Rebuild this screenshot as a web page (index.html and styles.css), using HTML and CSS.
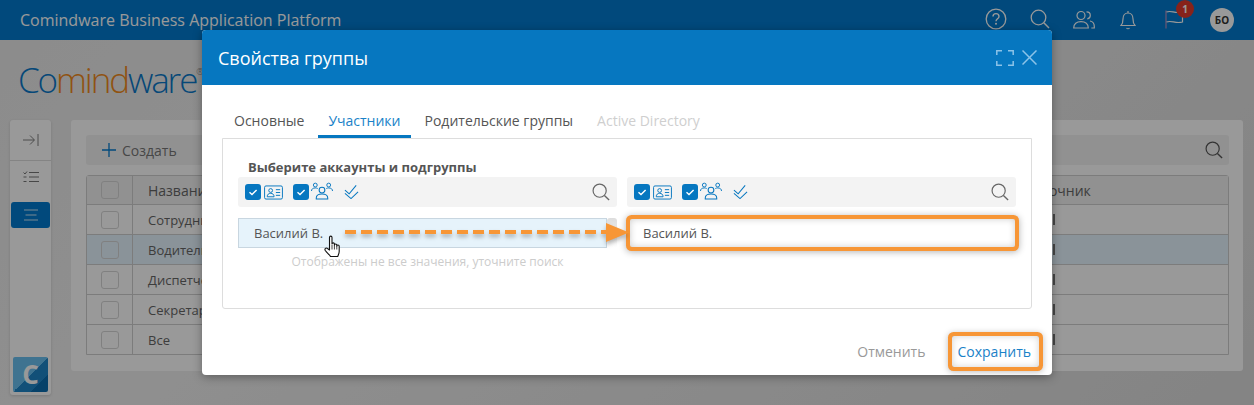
FILE: index.html
```html
<!DOCTYPE html>
<html lang="ru">
<head>
<meta charset="utf-8">
<title>Свойства группы</title>
<link rel="stylesheet" href="styles.css">
</head>
<body>
<svg class="defs" width="0" height="0">
  <symbol id="i-search" viewBox="0 0 20 20"><circle cx="8.5" cy="8.5" r="7.3" fill="none" stroke="currentColor" stroke-width="1.3"/><path d="M13.8 13.8 19 19" fill="none" stroke="currentColor" stroke-width="1.5"/></symbol>
  <symbol id="i-check" viewBox="0 0 16 16"><path d="M4.5 8.3 7 10.6 11.6 6" fill="none" stroke="#fff" stroke-width="1.4"/></symbol>
  <symbol id="i-card" viewBox="0 0 20 15"><rect x=".6" y=".6" width="18.8" height="13.8" rx="1.5" fill="none" stroke="currentColor" stroke-width="1"/><circle cx="7" cy="5.4" r="2" fill="none" stroke="currentColor"/><path d="M3.4 12c0-2.6 1.6-3.6 3.6-3.6s3.600 1 3.600 3.600zM12.500 4.500h4.500M12.500 7.500h4.500M12.500 10.500h4.500" fill="none" stroke="currentColor"/></symbol>
  <symbol id="i-group" viewBox="0 0 23 18"><circle cx="11.500" cy="8" r="3" fill="none" stroke="currentColor" stroke-width="1.100"/><path d="M5.500 17.400v-1c0-3 2.500-4.200 6-4.200s6 1.200 6 4.200v1z" fill="none" stroke="currentColor" stroke-width="1.100"/><circle cx="4.500" cy="2.800" r="2" fill="none" stroke="currentColor"/><circle cx="18.500" cy="2.800" r="2" fill="none" stroke="currentColor"/><path d="M.5 9c0-2 1.500-3.200 4-3.200 1 0 1.800.2 2.500.6M22.500 9c0-2-1.500-3.200-4-3.200-1 0-1.800.2-2.500.6" fill="none" stroke="currentColor"/></symbol>
  <symbol id="i-dcheck" viewBox="0 0 16 16"><path d="M1 6.500 5.500 10.500 13 1.500M1 10 7.500 15.500 15 8.500" fill="none" stroke="currentColor" stroke-width="1.100"/></symbol>
</svg>

<header class="topbar">
  <div class="product">Comindware Business Application Platform</div>
  <nav class="top-icons">
    <svg class="ti ti-help" viewBox="0 0 22 22"><circle cx="11" cy="11" r="9.800" fill="none" stroke="currentColor" stroke-width="1.300"/><path d="M8 8.600c0-1.900 1.300-3 3-3s3 1.100 3 2.800c0 2.400-3 2.400-3 4.800" fill="none" stroke="currentColor" stroke-width="1.400"/><circle cx="11" cy="15.800" r="1" fill="currentColor"/></svg>
    <svg class="ti ti-search"><use href="#i-search"/></svg>
    <svg class="ti ti-users" viewBox="0 0 22 19"><circle cx="8" cy="5.500" r="4" fill="none" stroke="currentColor" stroke-width="1.200"/><path d="M.7 18c0-4.500 3-6.300 7.300-6.300s7.300 1.800 7.300 6.300z" fill="none" stroke="currentColor" stroke-width="1.200"/><path d="M13.500 1.800c2.300 0 3.800 1.500 3.800 3.500s-1.300 3.400-3 3.600M17 11c2.600.5 4.300 2.300 4.300 5.500v1.500h-3" fill="none" stroke="currentColor" stroke-width="1.200"/></svg>
    <svg class="ti ti-bell" viewBox="0 0 16 20"><path d="M1 15.500c1.500-1.500 2-2.500 2-6.500 0-3.500 2-6 5-6s5 2.500 5 6c0 4 .5 5 2 6.500zM8 1v2M6.500 18c.8 1 2.200 1 3 0" fill="none" stroke="currentColor" stroke-width="1.200"/></svg>
    <span class="flag">
      <svg class="ti ti-flag" viewBox="0 0 19 19"><path d="M1 .5v18" stroke="#a78cc0" stroke-width="1.300" fill="none"/><path d="M1.500 2c5-2 8 2 16 0v10c-7 2-11-2-16 0" fill="none" stroke="currentColor" stroke-width="1.200"/></svg>
      <span class="badge">1</span>
    </span>
    <span class="avatar">БО</span>
  </nav>
</header>

<div class="brand"><span class="blue">Co</span><span class="orange">mind</span><span class="blue">ware</span><sup class="reg">®</sup></div>

<div class="workspace">
  <aside class="sidebar">
    <div class="side-top">
      <svg class="side-ic" viewBox="0 0 16 12"><path d="M0 6h11M7 1.500 11.500 6 7 10.500M15 0v12" fill="none" stroke="#fff" stroke-opacity=".75" stroke-width="1"/></svg>
    </div>
    <div class="side-item">
      <svg class="side-ic" viewBox="0 0 16 12"><path d="M6 1.500h10M6 6h10M6 10.500h10" stroke="#fff" stroke-opacity=".8" stroke-width="1.200" fill="none"/><path d="M.5 1.500 2 3 4 .5M.5 6h3M.5 10.500h3" stroke="#fff" stroke-opacity=".8" fill="none"/></svg>
    </div>
    <div class="side-active">
      <svg class="side-ic" viewBox="0 0 16 12"><path d="M1 1h14M2.500 6h11M1 11h14" stroke="#fff" stroke-opacity=".8" stroke-width="1.200" fill="none"/></svg>
    </div>
    <div class="side-logo">C</div>
  </aside>

  <main class="card">
    <div class="toolbar">
      <span class="create"><svg class="plus" viewBox="0 0 14 14"><path d="M7 0v14M0 7h14" stroke="#037bcf" stroke-width="1.300" fill="none"/></svg>Создать</span>
      <svg class="tool-search"><use href="#i-search"/></svg>
    </div>
    <div class="table">
      <div class="tr th"><span class="c-check"><i class="box"></i></span><span class="c-name">Название</span><span class="c-src">Источник</span></div>
      <div class="tr"><span class="c-check"><i class="box"></i></span><span class="c-name">Сотрудники</span><span class="c-src"><i class="stem"></i></span></div>
      <div class="tr sel"><span class="c-check"><i class="box"></i></span><span class="c-name">Водители</span><span class="c-src"><i class="stem"></i></span></div>
      <div class="tr"><span class="c-check"><i class="box"></i></span><span class="c-name">Диспетчеры</span><span class="c-src"><i class="stem"></i></span></div>
      <div class="tr"><span class="c-check"><i class="box"></i></span><span class="c-name">Секретари</span><span class="c-src"><i class="stem"></i></span></div>
      <div class="tr"><span class="c-check"><i class="box"></i></span><span class="c-name">Все</span><span class="c-src"><i class="stem"></i></span></div>
    </div>
  </main>
</div>

<div class="overlay">
  <section class="modal">
    <div class="modal-head">
      <h1 class="modal-title">Свойства группы</h1>
      <svg class="head-ic" viewBox="0 0 18 16"><path d="M.8 5V.8H6M12 .8h5.200V5M17.200 11v4.200H12M6 15.200H.8V11" fill="none" stroke="#8cc3e8" stroke-width="1.500"/></svg>
      <svg class="head-x" viewBox="0 0 15 15"><path d="M.5.5l14 14M14.500.5l-14 14" fill="none" stroke="#8cc3e8" stroke-width="1.500"/></svg>
    </div>
    <div class="modal-body">
      <div class="tabs">
        <span class="tab">Основные</span>
        <span class="tab active">Участники</span>
        <span class="tab">Родительские группы</span>
        <span class="tab disabled">Active Directory</span>
      </div>
      <div class="panel">
        <div class="panel-label">Выберите аккаунты и подгруппы</div>
        <div class="cols">
          <div class="col">
            <div class="filter">
              <i class="cb"><svg><use href="#i-check"/></svg></i><svg class="f-card"><use href="#i-card"/></svg>
              <i class="cb cb2"><svg><use href="#i-check"/></svg></i><svg class="f-group"><use href="#i-group"/></svg>
              <svg class="f-dcheck"><use href="#i-dcheck"/></svg>
              <svg class="f-search"><use href="#i-search"/></svg>
            </div>
            <div class="list-wrap">
              <div class="row row-selected">Василий В.</div>
              <div class="scroll"></div>
            </div>
            <div class="note">Отображены не все значения, уточните поиск</div>
          </div>
          <div class="col">
            <div class="filter">
              <i class="cb"><svg><use href="#i-check"/></svg></i><svg class="f-card"><use href="#i-card"/></svg>
              <i class="cb cb2"><svg><use href="#i-check"/></svg></i><svg class="f-group"><use href="#i-group"/></svg>
              <svg class="f-dcheck"><use href="#i-dcheck"/></svg>
              <svg class="f-search"><use href="#i-search"/></svg>
            </div>
            <div class="list-wrap">
              <div class="row row-target">Василий В.</div>
            </div>
          </div>
        </div>
      </div>
    </div>
    <div class="modal-foot">
      <button class="btn">Отменить</button>
      <button class="btn primary">Сохранить</button>
    </div>

    <svg class="drag-arrow" viewBox="0 0 290 24">
      <path d="M1 10H264" fill="none" stroke="#f79636" stroke-width="4" stroke-dasharray="11 5"/>
      <path d="M262 1 285 10.500 262 20z" fill="#f79636"/>
    </svg>
    <svg class="hand" viewBox="0 0 18 23"><path d="M5.500 15V2.500C5.500 .6 8 .6 8 2.500V9c0-1.500 2.400-1.500 2.400 0v1c0-1.400 2.400-1.400 2.400 0v1c0-1.300 2.400-1.300 2.400.2v5.300c0 2-1 3.500-1.500 5H6.500C5.500 19.500 3 18 1.300 15.500.2 13.800 2 12.300 3.500 13.500z" fill="#fff" stroke="#111" stroke-width="1.100" stroke-linejoin="round"/><path d="M8 10v4.500M10.400 10v4.500M12.800 11v3.500" fill="none" stroke="#111" stroke-width=".8"/></svg>
  </section>
</div>
</body>
</html>
```
FILE: styles.css
```css
* { box-sizing: border-box; }
html, body { margin: 0; height: 405px; overflow: hidden; }
body {
  position: relative;
  width: 1254px;
  font-family: "Open Sans", "Noto Sans", sans-serif;
  font-size: 14px;
  color: #666;
  background: linear-gradient(135deg, #e9e9e9 0%, #efefef 30%, #e4e4e4 70%, #dcdcdc 100%);
}
.defs { position: absolute; }

.topbar { height: 40px; background: #037bcf; display: flex; align-items: center; padding-left: 20px; color: #fff; }
.product { font-size: 16px; line-height: 40px; color: #fff; white-space: nowrap; }
.top-icons { margin-left: auto; display: flex; align-items: center; color: #fff; }
.ti { display: block; }
.ti-help { width: 22px; height: 22px; margin-right: 23px; margin-top: -2px; }
.ti-search { width: 20px; height: 20px; margin-right: 23px; margin-top: -2px; }
.ti-users { width: 22px; height: 19px; margin-right: 25px; margin-top: -2px; }
.ti-bell { width: 16px; height: 20px; margin-right: 29px; }
.flag { position: relative; display: block; margin-right: 26px; }
.ti-flag { width: 19px; height: 19px; margin-top: -1px; }
.badge { position: absolute; left: 11px; top: -11px; width: 18px; height: 18px; border-radius: 50%; background: #e2392c; color: #fff; font-size: 10px; font-weight: 700; line-height: 18px; text-align: center; }
.avatar { width: 24px; height: 24px; margin-right: 20px; border-radius: 50%; background: #fff; color: #333; font-size: 10px; font-weight: 700; line-height: 24px; text-align: center; }

.brand { height: 80px; padding: 18px 0 0 18px; font-size: 35px; font-weight: 300; letter-spacing: -2.1px; line-height: 44px; white-space: nowrap; }
.blue { color: #0a78c8; }
.orange { color: #f08a1d; }
.reg { font-size: 9px; color: #888; letter-spacing: 0; vertical-align: 18px; line-height: 0; }

.workspace { display: flex; gap: 20px; padding-left: 10px; padding-right: 11px; align-items: flex-start; }
.sidebar { width: 41px; height: 275px; background: #fff; border-radius: 3px; display: flex; flex-direction: column; align-items: center; box-shadow: 0 1px 3px rgba(0,0,0,.15); }
.side-ic { width: 16px; height: 12px; display: block; }
.side-top { width: 100%; height: 41px; display: flex; align-items: center; justify-content: center; border-bottom: 1px solid #ddd; }
.side-top .side-ic path { stroke: #555; }
.side-item { height: 41px; padding-top: 10px; }
.side-item .side-ic path { stroke: #555; }
.side-active { width: 39px; height: 26px; border-radius: 3px; background: #037bcf; display: flex; align-items: center; justify-content: center; }
.side-logo { margin-top: auto; margin-bottom: 3px; width: 35px; height: 35px; border-radius: 2px; color: #fff; font-size: 26px; font-weight: 700; line-height: 35px; text-align: center; background: linear-gradient(135deg, #6ac0f0 0 50%, #1f86c8 50% 75%, #0b6db0 75%); }

.card { flex: 1; height: 251px; background: #fff; border-radius: 3px; padding: 15px 14px 0 15px; }
.toolbar { height: 30px; background: #f2f2f2; border-radius: 3px; display: flex; align-items: center; padding: 0 6px 0 16px; }
.create { display: flex; align-items: center; gap: 6px; color: #777; font-size: 14px; }
.plus { width: 14px; height: 14px; display: block; }
.tool-search { width: 18px; height: 18px; margin-left: auto; color: #555; }
.table { margin-top: 10px; border: 1px solid #cfcfcf; border-radius: 3px 3px 0 0; width: 1143px; }
.tr { height: 30px; display: flex; align-items: center; border-top: 1px solid #cfcfcf; font-size: 13px; }
.tr.th { height: 28px; background: #f2f2f2; border-top: 0; font-size: 14px; }
.tr.sel { background: #e6f5ff; }
.c-check { width: 46px; height: 100%; border-right: 1px solid #cfcfcf; display: flex; align-items: center; justify-content: center; }
.box { width: 18px; height: 18px; border: 1px solid #d6d6d6; border-radius: 3px; background: transparent; display: block; }
.c-name { padding-left: 15px; width: 880px; color: #666; }
.c-src { color: #666; padding-left: 12px; }
.stem { display: block; width: 2px; height: 11px; margin-left: 28px; background: #777; }

.overlay { position: absolute; inset: 0; background: rgba(0,0,0,.4); }
.modal { position: absolute; left: 202px; top: 30px; width: 850px; height: 345px; background: #fff; border-radius: 4px; box-shadow: 0 2px 10px rgba(0,0,0,.35); display: flex; flex-direction: column; }
.modal-head { height: 55px; background: #0677c0; border-radius: 4px 4px 0 0; display: flex; align-items: center; padding: 0 15px 0 16px; }
.modal-title { margin: 0; font-size: 18px; font-weight: 400; color: #fff; flex: 1; }
.head-ic { width: 18px; height: 16px; margin-right: 8px; display: block; }
.head-x { width: 15px; height: 15px; display: block; }

.modal-body { padding: 26px 20px 0; }
.tabs { display: flex; gap: 4px; height: 27px; margin-left: 2px; }
.tab { padding: 0 10px; line-height: 20px; font-size: 14px; color: #555; white-space: nowrap; }
.tab.active { color: #1a82c8; border-bottom: 3px solid #0677c0; }
.tab.disabled { color: #cfcfcf; }
.panel { height: 171px; border: 1px solid #ddd; border-radius: 0 0 3px 3px; padding: 19px 15px 0; }
.panel-label { height: 19px; line-height: 19px; padding-left: 10px; font-size: 13px; font-weight: 700; color: #555; }
.cols { display: grid; grid-template-columns: 379px 1fr; gap: 10px; }
.filter { height: 30px; background: #f3f3f3; border-radius: 3px; display: flex; align-items: center; padding: 0 7px; color: #0677c0; }
.cb { width: 16px; height: 16px; background: #0677c0; border-radius: 3px; display: block; margin-right: 3px; }
.cb svg { width: 16px; height: 16px; display: block; }
.cb2 { margin-left: 10px; margin-right: 2px; }
.f-card { width: 19px; height: 15px; }
.f-group { width: 22px; height: 18px; margin-top: -3px; }
.f-dcheck { width: 15px; height: 15px; margin-left: 11px; margin-top: -1px; }
.f-search { width: 18px; height: 18px; margin-left: auto; color: #666; }

.list-wrap { display: flex; margin-top: 11px; height: 30px; }
.row { height: 30px; line-height: 28px; padding-left: 15px; color: #555; font-size: 13px; flex: 1; }
.row-selected { background: #e6f3fb; border: 1px solid #c8d6e0; }
.scroll { width: 10px; height: 30px; background: linear-gradient(#ddd, #fff); border-radius: 3px 3px 0 0; }
.row-target { background: #fff; height: 28px; line-height: 28px; padding-left: 13px; margin: 1px 1px 1px 3px; border-radius: 2px; box-shadow: 0 0 0 4px #f79636, 0 1px 7px 4px rgba(0,0,0,.3), inset 0 0 7px rgba(0,0,0,.2); }
.note { text-align: center; font-size: 12px; color: #ccc; line-height: 16px; margin-top: 6px; }

.modal-foot { margin-top: auto; display: flex; justify-content: flex-end; align-items: center; gap: 16px; padding: 0 13px 8px 0; }
.btn { border: 0; background: transparent; font: inherit; font-size: 14px; color: #999; height: 31px; padding: 0 11px 0 10px; border-radius: 2px; }
.btn.primary { color: #1a82c8; padding: 0 8px 0 5px; box-shadow: 0 0 0 4px #f79636, 0 1px 6px 4px rgba(0,0,0,.25), inset 0 0 7px rgba(0,0,0,.18); }

.drag-arrow { position: absolute; left: 142px; top: 192px; width: 290px; height: 24px; filter: drop-shadow(0 3px 2px rgba(0,0,0,.28)); }
.hand { position: absolute; left: 122px; top: 205px; width: 18px; height: 23px; }
```
